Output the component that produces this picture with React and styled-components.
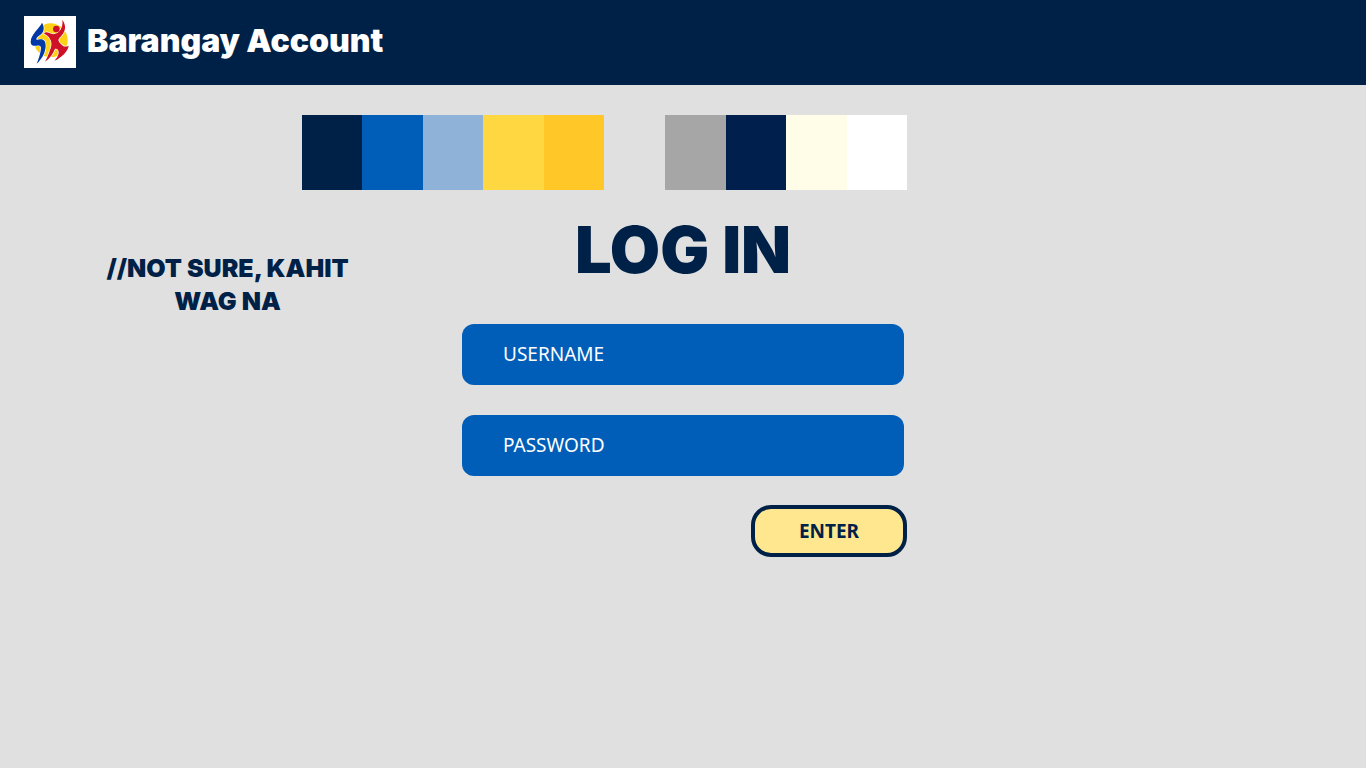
import React from "react";
import styled, { createGlobalStyle } from "styled-components";

const navy = "#002147";
const blue = "#005eb8";

const GlobalStyle = createGlobalStyle`
  *, *::before, *::after { box-sizing: border-box; }
  html, body, #root { min-height: 100vh; }
  body {
    margin: 0;
    background: #e0e0e0;
    color: ${navy};
    font-family: Inter, "Open Sans", sans-serif;
  }
`;

const Header = styled.header`
  display: flex;
  align-items: flex-start;
  gap: 11px;
  min-height: 85px;
  padding: 16px 24px;
  background: ${navy};
  color: #fff;
`;

const Logo = styled.svg`
  display: block;
  width: 52px;
  height: 52px;
`;

const SiteTitle = styled.p`
  margin: 0;
  font-size: 32px;
  line-height: 50px;
  font-weight: 900;
  white-space: nowrap;
`;

const Palette = styled.div`
  display: flex;
  justify-content: flex-end;
  gap: 61px;
  padding: 30px calc(50% - 224px) 0 0;
`;

const SwatchGroup = styled.div`
  display: flex;
  width: ${(p) => p.$width};
  height: 75px;
`;

const Swatch = styled.div`
  flex: 1;
  background: ${(p) => p.$color};
`;

const Main = styled.main`
  display: grid;
  grid-template-columns: 1fr 448px 1fr;
  column-gap: 4px;
  padding: 26px 0 40px;
`;

const Note = styled.p`
  justify-self: center;
  width: 264px;
  margin: 36px 0 0;
  font-size: 25px;
  line-height: 33px;
  font-weight: 900;
  text-align: center;
`;

const LoginForm = styled.form`
  grid-column: 2;
  display: flex;
  flex-direction: column;
`;

const Heading = styled.h1`
  margin: 0 0 40px;
  font-size: 65px;
  line-height: 68px;
  font-weight: 900;
  text-align: center;
`;

const Field = styled.input`
  height: 61px;
  margin: 0 3px;
  padding: 0 41px 1px;
  border: 0;
  border-radius: 12px;
  background: ${blue};
  color: #fff;
  font-family: "Noto Sans", "Open Sans", sans-serif;
  font-size: 19px;
  & + & { margin-top: 30px; }
  &::placeholder { color: #fff; opacity: 1; }
`;

const EnterButton = styled.button`
  align-self: flex-end;
  width: 156px;
  height: 52px;
  margin-top: 29px;
  padding: 0 0 1px;
  border: 4px solid ${navy};
  border-radius: 20px;
  background: #ffe78f;
  color: ${navy};
  font-family: "Noto Sans", "Open Sans", sans-serif;
  font-size: 19px;
  font-weight: 700;
`;

const brandColors = [navy, blue, "#8fb2d9", "#ffd740", "#ffc828"];
const neutralColors = ["#a6a6a6", "#001f4d", "#fffde7", "#ffffff"];

function YouthLogo() {
  return (
    <Logo viewBox="0 0 156 156" role="img" aria-label="Youth council logo">
      <rect width="156" height="156" fill="#fff" />
      <circle cx="80" cy="73" r="51" fill="#fcd116" />
      <g stroke="#fff" strokeWidth="4" strokeLinejoin="round" paintOrder="stroke">
        <path
          fill="#0038a8"
          d="M54 20C48 36 21 53 20 77C20 88 28 91 38 89C46 87 51 88 51 97C50 112 44 129 38 143C54 129 65 108 65 89C65 76 60 69 48 70C41 71 36 72 37 68C40 59 54 57 58 45C61 35 58 27 54 20Z"
        />
        <path
          fill="#ce1126"
          d="M115 11C117 27 113 42 100 51C91 56 83 55 76 51C68 47 62 49 60 54C68 55 77 64 81 75C84 85 82 94 77 105C73 116 69 127 63 137C78 127 88 112 93 98C101 97 105 103 104 112C102 121 98 127 92 134C113 124 132 106 134 89C122 96 115 89 107 80C103 75 102 71 106 66C117 56 124 45 123 31C122 23 119 17 115 11Z"
        />
      </g>
      <circle cx="97" cy="39" r="10" fill="#ce1126" />
    </Logo>
  );
}

export default function App() {
  return (
    <>
      <GlobalStyle />
      <Header>
        <YouthLogo />
        <SiteTitle>Barangay Account</SiteTitle>
      </Header>
      <Palette aria-hidden="true">
        <SwatchGroup $width="302px">
          {brandColors.map((color) => (
            <Swatch key={color} $color={color} />
          ))}
        </SwatchGroup>
        <SwatchGroup $width="242px">
          {neutralColors.map((color) => (
            <Swatch key={color} $color={color} />
          ))}
        </SwatchGroup>
      </Palette>
      <Main>
        <Note>//NOT SURE, KAHIT WAG NA</Note>
        <LoginForm onSubmit={(event) => event.preventDefault()}>
          <Heading>LOG IN</Heading>
          <Field type="text" name="username" aria-label="Username" placeholder="USERNAME" />
          <Field type="password" name="password" aria-label="Password" placeholder="PASSWORD" />
          <EnterButton type="submit">ENTER</EnterButton>
        </LoginForm>
      </Main>
    </>
  );
}
